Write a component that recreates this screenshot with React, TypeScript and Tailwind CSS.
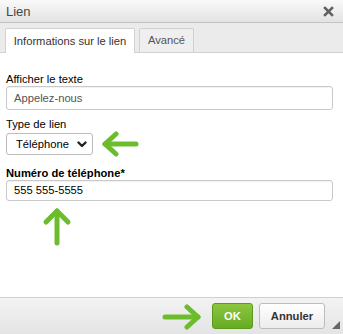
const GREEN = "#6cbd2e";

function ArrowLeft() {
  return (
    <svg width="40" height="26" viewBox="0 0 40 26" className="block">
      <g stroke={GREEN} strokeWidth="5" strokeLinecap="round" strokeLinejoin="round" fill="none">
        <path d="M4 13 H35" />
        <path d="M15 3 L4 13 L15 23" />
      </g>
    </svg>
  );
}

function ArrowRight() {
  return (
    <svg width="42" height="26" viewBox="0 0 42 26" className="block">
      <g stroke={GREEN} strokeWidth="5" strokeLinecap="round" strokeLinejoin="round" fill="none">
        <path d="M4 13 H37" />
        <path d="M26 3 L37 13 L26 23" />
      </g>
    </svg>
  );
}

function ArrowUp() {
  return (
    <svg width="32" height="40" viewBox="0 0 32 40" className="block">
      <g stroke={GREEN} strokeWidth="5" strokeLinecap="round" strokeLinejoin="round" fill="none">
        <path d="M16 4 V36" />
        <path d="M5 15 L16 4 L27 15" />
      </g>
    </svg>
  );
}

export default function App() {
  return (
    <div
      className="w-[343px] h-[334px] flex flex-col bg-white overflow-hidden text-[11.2px] text-black"
      style={{ fontFamily: '"Liberation Sans", Arial, sans-serif' }}
    >
      {/* title bar */}
      <div className="h-[23px] shrink-0 flex items-center justify-between pl-[6px] pr-[9px] bg-gradient-to-b from-[#f9f9f9] to-[#e3e3e3] border-b border-[#c4c4c4]">
        <span className="text-[13px] text-[#474747] leading-none">Lien</span>
        <svg width="11" height="11" viewBox="0 0 11 11">
          <g stroke="#616161" strokeWidth="2.6" strokeLinecap="square">
            <path d="M2 2 L9 9" />
            <path d="M9 2 L2 9" />
          </g>
        </svg>
      </div>

      {/* tabs */}
      <div className="h-[30px] shrink-0 flex items-end bg-[#ebebeb] border-b border-[#d1d1d1] pl-[5px] gap-[4px]">
        <div className="w-[130px] h-[25px] -mb-px bg-white border border-b-0 border-[#d1d1d1] rounded-t-[2px] flex items-center justify-center text-[#333]">
          Informations sur le lien
        </div>
        <div className="w-[55px] h-[24px] bg-[#efefef] border border-b-0 border-[#d1d1d1] rounded-t-[2px] flex items-center justify-center text-[#555]">
          Avancé
        </div>
      </div>

      {/* body */}
      <div className="flex-1 px-[6px] pt-[19px] pr-[10px]">
        <div className="leading-[14px]">Afficher le texte</div>
        <div className="h-[24px] border border-[#c9c9c9] rounded-[3px] shadow-[inset_0_1px_1px_rgba(0,0,0,0.06)] flex items-center pl-[7px] text-[#555]">
          Appelez-nous
        </div>

        <div className="leading-[14px] mt-[7px]">Type de lien</div>
        <div className="flex items-center gap-[8px]">
          <div className="w-[87px] h-[22px] border border-[#bcbcbc] rounded-[3px] flex items-center justify-between pl-[9px] pr-[5px]">
            <span>Téléphone</span>
            <svg width="10" height="7" viewBox="0 0 10 7">
              <path d="M1.5 1.5 L5 5 L8.5 1.5" stroke="#222" strokeWidth="2.4" fill="none" strokeLinecap="round" strokeLinejoin="round" />
            </svg>
          </div>
          <ArrowLeft />
        </div>

        <div className="leading-[14px] mt-[9px] font-bold">Numéro de téléphone*</div>
        <div className="h-[21px] border border-[#c9c9c9] rounded-[3px] shadow-[inset_0_1px_1px_rgba(0,0,0,0.06)] flex items-center pl-[7px]">
          555 555-5555
        </div>

        <div className="ml-[35px] mt-[6px]">
          <ArrowUp />
        </div>
      </div>

      {/* footer */}
      <div className="h-[37px] shrink-0 border-t border-[#cfcfcf] bg-gradient-to-b from-[#f3f3f3] to-[#e4e4e4] flex items-center justify-end pr-[18px] relative">
        <div className="mr-[9px] mt-[2px]">
          <ArrowRight />
        </div>
        <button className="w-[41px] h-[26px] rounded-[3px] border border-[#5a9b1f] bg-gradient-to-b from-[#8cc63f] to-[#66ac22] text-white font-bold text-[11.2px] flex items-center justify-center">
          OK
        </button>
        <button className="ml-[6px] w-[66px] h-[26px] rounded-[3px] border border-[#bcbcbc] bg-gradient-to-b from-[#ffffff] to-[#ececec] text-[#333] font-bold text-[11.2px] flex items-center justify-center">
          Annuler
        </button>
        <svg width="8" height="8" viewBox="0 0 8 8" className="absolute right-[3px] bottom-[5px]">
          <path d="M8 0 L8 8 L0 8 Z" fill="#666" />
        </svg>
      </div>
    </div>
  );
}
